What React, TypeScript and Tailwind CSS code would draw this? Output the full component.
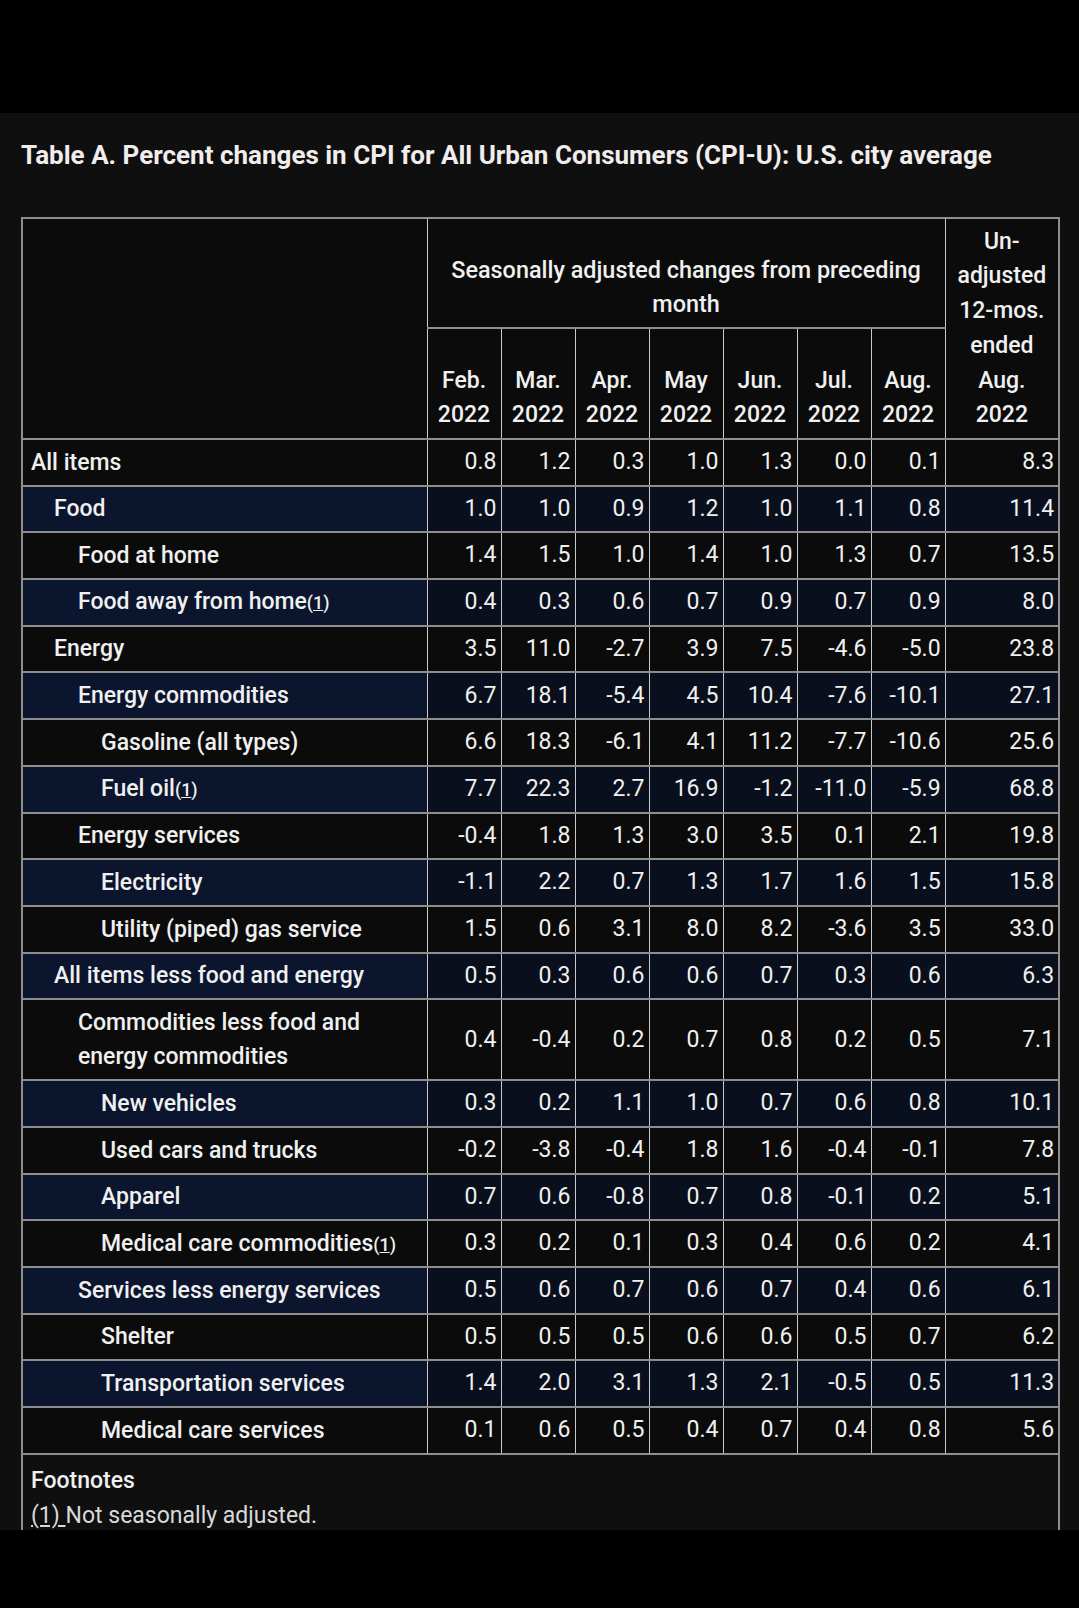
import React from 'react';

type Row = { label: string; level: number; note?: boolean; values: string[]; unadj: string };

const rows: Row[] = [
  { label: 'All items', level: 0, values: ['0.8', '1.2', '0.3', '1.0', '1.3', '0.0', '0.1'], unadj: '8.3' },
  { label: 'Food', level: 1, values: ['1.0', '1.0', '0.9', '1.2', '1.0', '1.1', '0.8'], unadj: '11.4' },
  { label: 'Food at home', level: 2, values: ['1.4', '1.5', '1.0', '1.4', '1.0', '1.3', '0.7'], unadj: '13.5' },
  { label: 'Food away from home', level: 2, note: true, values: ['0.4', '0.3', '0.6', '0.7', '0.9', '0.7', '0.9'], unadj: '8.0' },
  { label: 'Energy', level: 1, values: ['3.5', '11.0', '-2.7', '3.9', '7.5', '-4.6', '-5.0'], unadj: '23.8' },
  { label: 'Energy commodities', level: 2, values: ['6.7', '18.1', '-5.4', '4.5', '10.4', '-7.6', '-10.1'], unadj: '27.1' },
  { label: 'Gasoline (all types)', level: 3, values: ['6.6', '18.3', '-6.1', '4.1', '11.2', '-7.7', '-10.6'], unadj: '25.6' },
  { label: 'Fuel oil', level: 3, note: true, values: ['7.7', '22.3', '2.7', '16.9', '-1.2', '-11.0', '-5.9'], unadj: '68.8' },
  { label: 'Energy services', level: 2, values: ['-0.4', '1.8', '1.3', '3.0', '3.5', '0.1', '2.1'], unadj: '19.8' },
  { label: 'Electricity', level: 3, values: ['-1.1', '2.2', '0.7', '1.3', '1.7', '1.6', '1.5'], unadj: '15.8' },
  { label: 'Utility (piped) gas service', level: 3, values: ['1.5', '0.6', '3.1', '8.0', '8.2', '-3.6', '3.5'], unadj: '33.0' },
  { label: 'All items less food and energy', level: 1, values: ['0.5', '0.3', '0.6', '0.6', '0.7', '0.3', '0.6'], unadj: '6.3' },
  { label: 'Commodities less food and energy commodities', level: 2, values: ['0.4', '-0.4', '0.2', '0.7', '0.8', '0.2', '0.5'], unadj: '7.1' },
  { label: 'New vehicles', level: 3, values: ['0.3', '0.2', '1.1', '1.0', '0.7', '0.6', '0.8'], unadj: '10.1' },
  { label: 'Used cars and trucks', level: 3, values: ['-0.2', '-3.8', '-0.4', '1.8', '1.6', '-0.4', '-0.1'], unadj: '7.8' },
  { label: 'Apparel', level: 3, values: ['0.7', '0.6', '-0.8', '0.7', '0.8', '-0.1', '0.2'], unadj: '5.1' },
  { label: 'Medical care commodities', level: 3, note: true, values: ['0.3', '0.2', '0.1', '0.3', '0.4', '0.6', '0.2'], unadj: '4.1' },
  { label: 'Services less energy services', level: 2, values: ['0.5', '0.6', '0.7', '0.6', '0.7', '0.4', '0.6'], unadj: '6.1' },
  { label: 'Shelter', level: 3, values: ['0.5', '0.5', '0.5', '0.6', '0.6', '0.5', '0.7'], unadj: '6.2' },
  { label: 'Transportation services', level: 3, values: ['1.4', '2.0', '3.1', '1.3', '2.1', '-0.5', '0.5'], unadj: '11.3' },
  { label: 'Medical care services', level: 3, values: ['0.1', '0.6', '0.5', '0.4', '0.7', '0.4', '0.8'], unadj: '5.6' },
];

const months = ['Feb.', 'Mar.', 'Apr.', 'May', 'Jun.', 'Jul.', 'Aug.'];

const indent = ['pl-2', 'pl-[31px]', 'pl-[55px]', 'pl-[78px]'];

// cell borders: thin light verticals, heavier grey horizontals
const cell = 'border-x border-y-2 border-x-[#c9c9c9] border-y-[#8e8e8e]';

export default function App() {
  return (
    <div className="flex h-[1608px] w-[1079px] flex-col bg-black font-['Roboto',sans-serif] text-[#f0f0f0]">
      <div className="h-[113px] shrink-0 bg-black" />

      <div className="h-[1417px] shrink-0 overflow-hidden bg-[#0f0f0f]">
        <h1 className="ml-[21px] mt-[25px] text-[26px] font-bold leading-[34px] text-[#f2eded]">
          Table A. Percent changes in CPI for All Urban Consumers (CPI-U): U.S. city average
        </h1>

        <table className="ml-[21px] mt-[45px] w-[1037px] table-fixed border-collapse border-2 border-[#8e8e8e] text-[23px]">
          <colgroup>
            <col className="w-[405px]" />
            {months.map(m => (
              <col key={m} className="w-[74px]" />
            ))}
            <col className="w-[114px]" />
          </colgroup>
          <thead>
            <tr className="h-[110px]">
              <td rowSpan={2} className={`${cell} bg-[#0b0b0b]`} />
              <td colSpan={7} className={`${cell} bg-[#0b0b0b] pb-[5px] text-center align-bottom text-[23.4px] font-medium leading-[34.7px]`}>
                Seasonally adjusted changes from preceding
                <br />
                month
              </td>
              <td rowSpan={2} className={`${cell} bg-[#0b0b0b] pb-[5px] text-center align-bottom font-medium leading-[34.7px]`}>
                Un-
                <br />
                adjusted
                <br />
                12-mos.
                <br />
                ended
                <br />
                Aug.
                <br />
                2022
              </td>
            </tr>
            <tr className="h-[111px]">
              {months.map(m => (
                <td key={m} className={`${cell} bg-[#0b0b0b] pb-[5px] text-center align-bottom font-medium leading-[34.7px]`}>
                  {m}
                  <br />
                  2022
                </td>
              ))}
            </tr>
          </thead>
          <tbody>
            {rows.map((r, i) => {
              const navy = i % 2 === 1;
              const bgLabel = navy ? 'bg-[#0b152e]' : 'bg-[#0b0b0b]';
              const bgNum = navy ? 'bg-[#0a0f1d]' : 'bg-[#0b0b0b]';
              const tall = r.label.startsWith('Commodities');
              return (
                <tr key={r.label} className={tall ? 'h-[81px]' : 'h-[46.7px]'}>
                  <td className={`${cell} ${bgLabel} ${indent[r.level]} pr-3 font-medium leading-[33.3px]`}>
                    {r.label}
                    {r.note && (
                      <span className="text-[18px]">
                        (<span className="underline">1</span>)
                      </span>
                    )}
                  </td>
                  {r.values.map((v, j) => (
                    <td key={j} className={`${cell} ${bgNum} pr-1 text-right`}>
                      {v}
                    </td>
                  ))}
                  <td className={`${cell} ${bgNum} pr-1 text-right`}>{r.unadj}</td>
                </tr>
              );
            })}
            <tr>
              <td colSpan={9} className="border-x-2 border-x-[#8e8e8e] bg-[#0f0f0f] pl-2 pt-2 pb-10 leading-[35px]">
                <div className="font-medium">Footnotes</div>
                <div className="text-[#d9d9d9]">
                  <span className="underline">(1) </span>Not seasonally adjusted.
                </div>
              </td>
            </tr>
          </tbody>
        </table>
      </div>

      <div className="flex-1 bg-black" />
    </div>
  );
}
